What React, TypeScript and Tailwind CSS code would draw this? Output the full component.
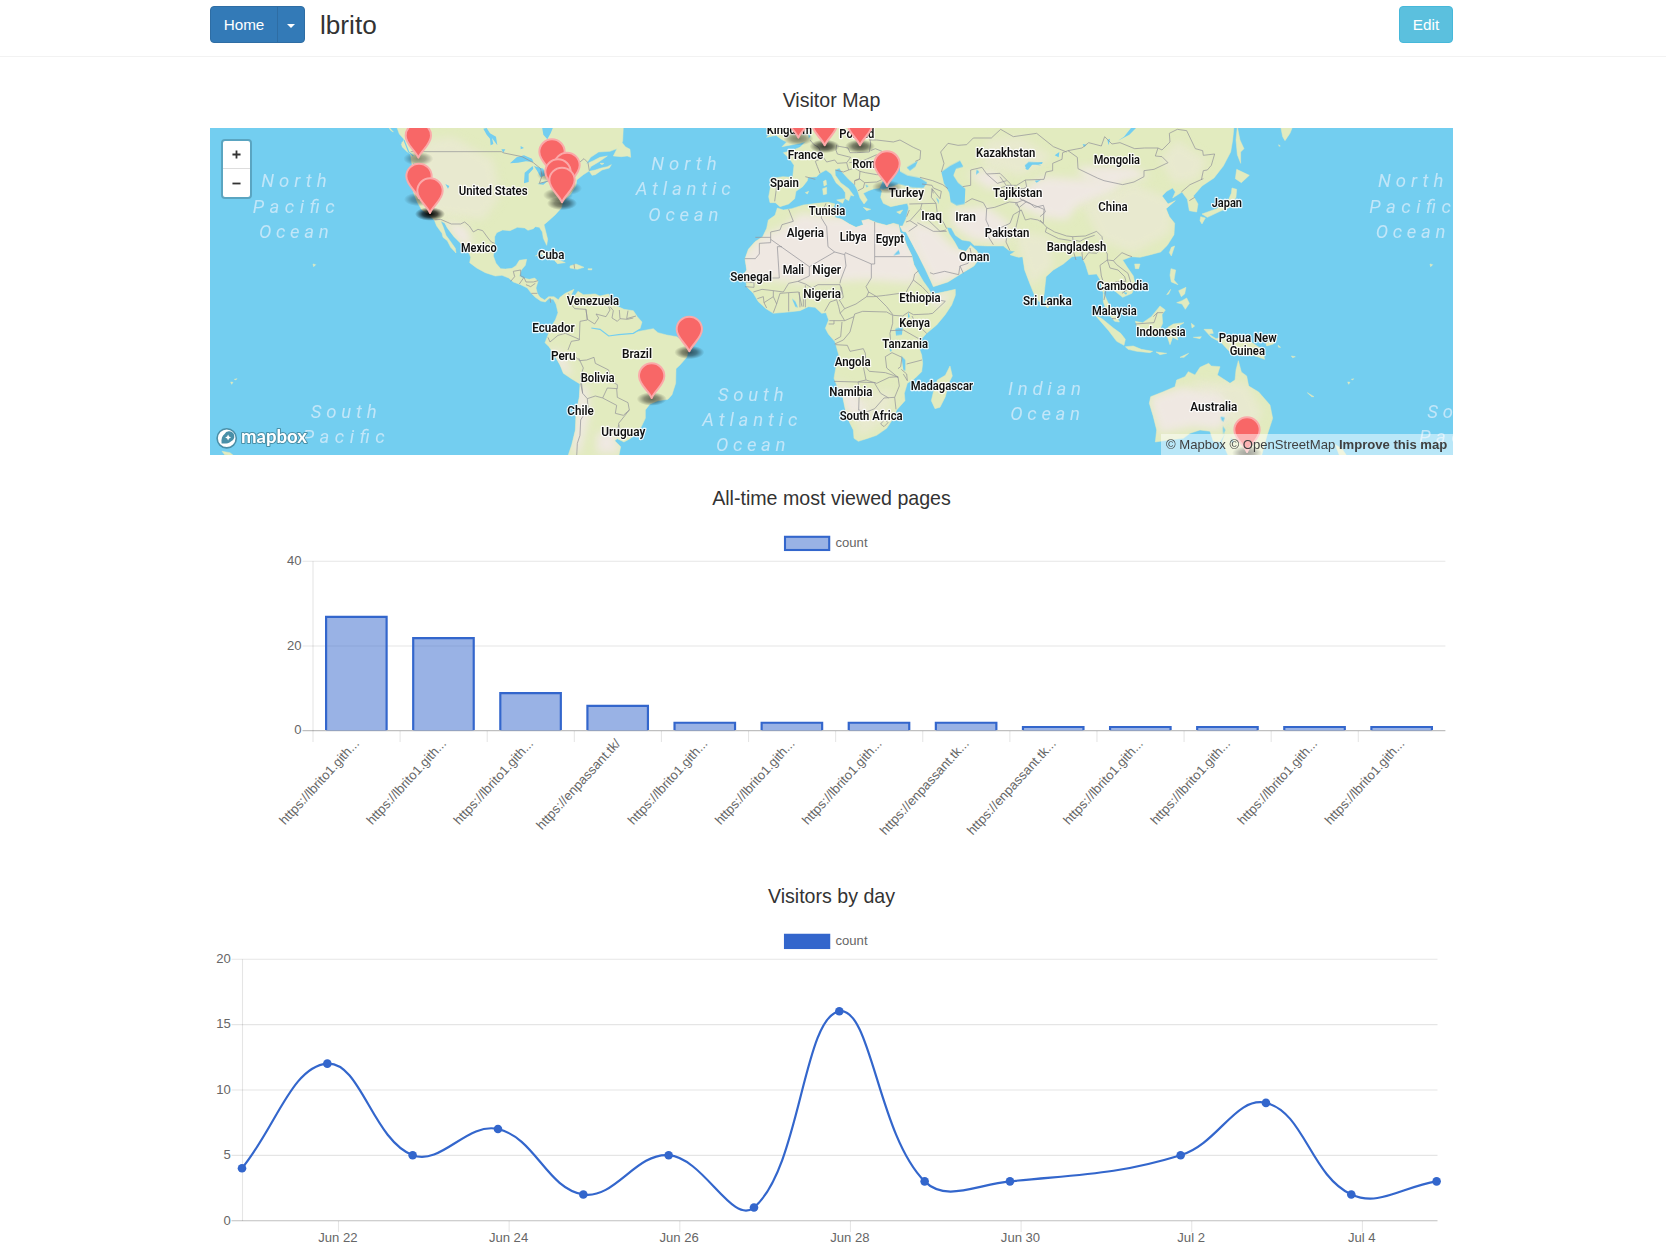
import React from "react";

/* ---------- map data: each region is drawn on its own 3x grid ---------- */

const AMERICAS = "translate(200 120) scale(.33333)";
const ATLANTIC = "translate(500 120) scale(.33333)";
const AFRICA = "translate(720 120) scale(.33333)";
const ASIA = "translate(1000 120) scale(.33333)";
const PACIFIC = "translate(1130 120) scale(.33333)";

const land: [string, string][] = [
  // North and Central America
  [AMERICAS, "M590 20L598 42L612 58L604 74L616 88L632 104L634 124L640 150L637 190L642 222L652 246L664 268L688 286L703 300L710 318L726 340L729 352L742 362L752 382L768 399L766 385L750 362L738 346L730 322L722 303L734 309L742 324L762 350L780 368L803 388L812 412L809 428L830 444L856 458L886 468L906 466L926 474L940 486L962 494L982 504L994 520L1006 532L1022 543L1036 546L1046 536L1060 538L1068 552L1076 540L1062 530L1046 530L1034 540L1020 532L1012 520L1008 504L1014 484L1004 474L988 478L968 474L958 468L964 450L976 436L980 418L958 421L948 437L936 445L916 447L902 446L888 430L880 408L884 382L884 350L890 338L908 330L930 332L952 322L974 324L984 331L1000 326L1006 320L1018 322L1027 336L1030 355L1040 376L1043 358L1036 330L1032 314L1046 302L1066 284L1084 264L1088 246L1112 222L1128 196L1130 180L1150 164L1166 154L1172 140L1196 126L1222 108L1200 112L1180 122L1158 132L1172 112L1196 96L1230 94L1256 84L1268 64L1270 20Z"],
  [AMERICAS, "M1168 154L1186 150L1204 144L1222 140L1234 134L1228 144L1206 150L1186 164L1176 166ZM1200 130L1212 130L1206 134Z"],
  [ATLANTIC, "M340 108L352 84L360 60L376 80L390 88L392 112L382 108L364 110Z"],
  [ATLANTIC, "M106 408L128 396L150 402L172 418L196 428L176 430L150 412L122 402ZM210 438L228 432L252 442L232 448L210 444ZM166 423L188 428L172 431ZM264 446L276 446L275 450L264 449Z"],
  // South America
  [ATLANTIC, "M168 552L180 532L196 520L222 508L214 524L222 530L234 514L250 524L286 522L300 528L326 522L332 542L346 556L372 568L400 572L412 590L426 606L420 626L406 636L460 626L474 638L500 645L530 650L550 664L566 690L560 712L540 735L528 746L527 790L516 824L504 838L474 842L450 852L436 870L436 895L424 920L405 944L390 956L372 966L352 956L344 962L362 980L356 1010L203 1010L215 975L226 930L228 880L238 830L240 792L214 776L190 760L180 735L160 700L147 680L135 668L144 645L150 625L166 600L174 578Z"],
  // Africa
  [AFRICA, "M172 264L190 270L215 266L250 255L290 250L325 247L345 252L338 266L350 280L344 292L365 298L388 312L408 322L430 314L425 302L445 298L470 308L500 316L520 310L536 314L540 335L552 352L560 376L575 406L582 434L596 460L610 484L626 506L634 522L652 520L680 514L706 508L706 526L695 555L675 585L650 615L620 640L605 656L596 680L605 705L608 730L605 755L585 775L562 790L553 820L555 842L530 870L520 895L500 925L470 946L440 956L415 964L402 955L400 930L385 900L376 870L368 830L352 800L342 775L348 740L360 718L352 690L345 665L325 642L316 625L326 600L318 578L305 580L285 562L265 560L240 572L205 576L160 580L138 566L115 545L100 520L80 500L78 485L66 472L80 450L75 416L85 388L105 365L128 350L140 325L145 300L165 286Z"],
  [AFRICA, "M690 738L697 768L686 790L676 830L660 862L645 866L634 842L642 808L652 780L676 766Z"],
  // Europe and Asia
  [AFRICA, "M190 98L210 118L222 136L218 172L188 170L150 176L152 198L146 230L150 248L166 248L180 260L206 252L224 236L228 214L248 200L262 182L264 172L290 170L300 160L318 150L334 162L348 188L368 206L376 218L376 236L386 242L392 226L402 228L386 206L362 188L346 166L345 150L358 144L366 156L386 178L404 194L412 210L420 234L432 252L442 240L430 220L446 212L462 206L480 204L486 214L482 232L490 250L512 260L540 254L562 250L566 264L558 296L548 318L540 318L548 334L558 336L575 368L596 408L616 448L632 482L640 500L684 486L722 462L762 438L782 410L770 392L752 376L738 394L716 388L704 366L688 342L680 322L694 324L706 346L726 360L750 364L762 376L800 378L850 378L868 392L886 394L870 404L896 412L908 410L914 450L930 492L946 532L958 546L972 525L978 470L1000 450L1030 432L1056 410L1084 408L1096 432L1106 464L1130 462L1142 482L1147 512L1156 530L1166 552L1188 584L1198 606L1184 604L1160 575L1150 545L1150 520L1160 500L1176 506L1208 532L1236 520L1246 495L1240 468L1222 442L1208 420L1234 410L1260 412L1292 404L1322 396L1342 376L1362 344L1364 310L1348 290L1338 266L1366 242L1344 252L1326 228L1340 214L1358 204L1366 216L1358 234L1386 216L1402 238L1408 272L1430 276L1434 252L1420 228L1446 198L1482 174L1510 138L1532 96L1538 60L1542 20L262 20L272 50L240 82L214 92Z"],
  [AFRICA, "M138 20L150 44L140 52L168 46L184 58L200 66L186 80L240 70L266 62L262 20Z"],
  [AFRICA, "M310 184L318 180L320 194L312 198ZM308 206L320 202L320 222L310 224ZM350 240L374 236L368 250ZM430 262L452 268L440 272ZM530 276L548 270L540 282ZM256 218L266 214L262 222Z"],
  [ASIA, "M712 20L720 60L732 86L722 96L722 130L712 104L708 60ZM710 148L748 166L724 188L706 176ZM696 204L710 208L708 232L690 262L660 274L622 292L606 282L650 266L686 238L694 220ZM602 290L616 294L606 312L600 302ZM514 382L524 378L514 408L508 398ZM404 432L420 432L416 446L406 446ZM136 540L152 548L144 564L134 556Z"],
  [ASIA, "M513 446L527 450L522 480L534 494L514 486L510 466ZM530 548L546 542L560 534L568 550L556 568L546 552ZM536 512L558 502L554 522L544 530ZM500 524L512 508L506 522Z"],
  [ASIA, "M284 584L306 596L340 624L362 640L376 658L372 676L350 664L326 632L300 602ZM376 680L400 678L424 688L458 694L450 698L410 694L384 688ZM406 604L428 608L454 590L480 558L496 570L486 584L488 610L470 650L442 646L416 632ZM504 622L520 612L552 608L530 622L526 636L534 660L518 652L510 674L502 650ZM468 696L500 700L480 704ZM540 712L566 700L552 712ZM574 610L584 618L576 624ZM580 652L604 650L600 656Z"],
  // Australia and Oceania
  [PACIFIC, "M222 628L246 628L250 640L236 642L258 656L290 648L360 664L396 688L404 718L370 706L320 704L296 692L274 668L244 652ZM408 670L440 658L430 672L410 678ZM444 676L452 682L446 682ZM484 708L496 710L488 713Z"],
  [PACIFIC, "M325 722L334 756L350 768L356 798L386 816L420 855L428 895L410 950L394 1010L296 1010L276 966L286 938L270 966L250 964L240 934L210 930L180 940L160 955L116 960L76 966L80 930L70 890L58 850L62 830L100 815L135 800L140 780L165 770L175 755L195 765L210 742L236 730L244 738L270 740L262 765L300 790L315 780L318 750Z"],
  [PACIFIC, "M616 974L636 986L652 1010L628 1006ZM653 786L660 787L656 793ZM664 778L671 776L668 780ZM532 818L552 830L545 830ZM900 432L908 434L902 440ZM452 20L488 20L480 40L465 62L458 50ZM446 74L451 78L447 79Z"],
  [AMERICAS, "M92 786L99 787L95 793ZM103 778L111 776L107 780ZM339 432L347 434L341 440ZM66 994L90 998L100 1006L74 1004ZM606 66L622 84L636 98L622 96L606 80ZM566 20L580 36L572 34Z"],
];

const lakes: [string, string][] = [
  [AMERICAS, "M930 130L950 112L972 106L996 116L1000 126L978 124L954 128ZM972 190L974 158L998 138L1000 146L986 162L986 186ZM1002 138L1030 146L1036 166L1022 172L1012 154ZM1012 192L1044 182L1030 194ZM850 26L860 44L870 56L872 76L880 72L876 54L892 76L888 50L870 40L860 24ZM904 88L916 88L910 98ZM736 192L748 198L744 206ZM1026 20L1030 44L1042 58L1052 40L1060 20ZM640 128L646 136L642 144ZM962 78L972 84L962 88Z"],
  [AFRICA, "M478 206L488 184L494 160L518 146L540 138L540 154L562 166L600 174L622 188L610 204L576 202L536 192L508 202L490 208ZM560 142L594 122L586 140L570 152ZM664 156L690 138L720 122L730 140L708 146L700 166L714 188L736 206L734 252L710 256L692 246L688 218L672 190ZM770 148L778 156L768 164ZM526 626L548 620L546 644L528 646ZM508 676L516 692L510 694ZM544 708L556 720L556 752L550 750ZM564 576L570 590L564 594ZM216 536L226 544L234 562L226 560ZM520 406L536 390L540 402ZM648 232L656 240L656 252ZM436 194L446 198L440 202ZM914 136L926 126L950 128L964 136L938 132L920 148Z"],
  [ASIA, "M354 62L372 50L396 20L408 24L388 44ZM76 146L88 128L128 126L126 132L96 134L84 150ZM248 72L260 74L252 82ZM322 60L330 56L326 76ZM164 106L178 96L176 112ZM104 182L122 180L110 188ZM368 516L382 518L378 524Z"],
  [PACIFIC, "M272 890L284 892L280 906L274 900ZM278 918L286 930L280 944ZM302 952L312 966L304 968Z"],
];

const deserts: [string, string][] = [
  // Sahara, Arabia, Iran, Tibet and Gobi
  [AFRICA, "M60 420L120 350L190 320L240 280L330 290L440 290L560 320L600 450L580 490L440 480L250 490L160 480L70 480Z"],
  [AFRICA, "M560 300L640 320L700 380L780 400L740 460L640 500L590 400Z"],
  [AFRICA, "M690 270L800 260L870 310L860 370L760 360L700 320Z"],
  [AFRICA, "M700 520L660 560L620 550L660 520Z"],
  [AFRICA, "M350 780L410 820L440 860L410 890L380 880Z"],
  [ASIA, "M30 230L130 170L270 180L370 190L330 220L230 260L200 300L120 290L60 260Z"],
  [ASIA, "M230 140L400 140L450 170L350 190L250 170Z"],
  [ASIA, "M-100 160L-20 150L20 190L-30 210Z"],
  [AMERICAS, "M730 300L800 320L820 380L780 370Z"],
  [ATLANTIC, "M230 790L262 800L270 880L240 1000L215 1000L230 880Z"],
  [ATLANTIC, "M290 940L340 930L360 1000L290 1000Z"],
  [ATLANTIC, "M150 680L190 700L220 770L180 750Z"],
  [PACIFIC, "M60 830L160 800L270 820L300 870L270 930L190 920L90 940L70 880Z"],
];

const khaki: [string, string][] = [
  [ASIA, "M250 260L400 190L520 240L510 340L400 400L300 360Z"],
  [ASIA, "M-40 60L60 50L160 110L60 170L-60 130Z"],
  [ASIA, "M40 330L150 350L160 440L90 500Z"],
  [ASIA, "M530 60L620 120L590 180L520 190L480 120Z"],
  [AFRICA, "M490 210L620 210L630 240L500 250Z"],
  [AFRICA, "M400 880L440 820L520 810L500 900L420 950Z"],
  [AMERICAS, "M680 60L760 50L880 120L900 230L850 300L760 290L690 280L660 200Z"],
  [PACIFIC, "M180 780L350 790L400 880L330 960L280 880Z"],
];

const borders: [string, string][] = [
  [AMERICAS, "M632 95L904 95L912 99L966 110L1000 128L1022 146L1026 168L1018 190L1050 182M1140 126L1152 116L1164 128L1168 152M703 300L722 298L754 312L782 312L794 306L808 318L820 336L834 328L848 332L864 354L874 366L884 370M932 484L944 470L940 454L962 450M962 450L962 468L972 472L958 492M972 472L978 486L1000 486L1014 482M978 494L992 500L1006 490M994 520L1012 520M1050 534L1052 548"],
  [ATLANTIC, "M206 520L210 548L224 566L258 568L262 600L240 604L238 660L214 664L204 690M258 568L262 598L284 612L296 594L288 582L318 590L330 570L326 560M330 560L340 572L336 594L352 604L360 596L358 570M384 572L380 596L408 588M360 596L382 598L400 594M144 652L150 666L174 646L196 640L238 658M228 712L238 722L260 720L282 712L286 730L326 750L328 768L318 776L352 794L352 806L322 804L308 834L286 828L262 836L248 820L242 790M236 714L250 744L242 768L248 820M262 836L264 864L242 900L240 946L232 970L230 1010M308 834L350 856L346 880L370 886L388 870L384 848L352 832L350 806M388 870L356 910L358 926L394 950M356 914L350 950M222 432L224 446"],
  [AFRICA, "M256 170L286 178M165 186L170 200L164 244M286 124L292 140L300 160M270 60L282 74L296 82L310 112L286 124M310 112L320 126L344 120L352 130L380 128L392 112L352 102L348 90L350 74M352 78L384 84L390 98L410 98L448 96L452 72L448 40L424 24M448 60L470 60L520 66L540 60L580 82L602 92L600 118L586 124M452 92L466 86L486 94L500 116L494 140M380 128L386 150L370 156L346 150M386 150L404 144L420 154L418 178L404 182L404 194M420 154L436 158L470 164L486 164M404 182L418 176L434 188L430 204L414 212M434 188L470 186L488 178M388 128L430 122L470 104M600 172L638 182L668 194L684 206M606 192L636 196L640 204L664 214L660 236L636 206M636 206L634 232L648 250L568 252M606 250L602 266L570 302L558 306M602 266L620 296L660 334L678 330M570 302L592 316L566 334M592 308L640 334L680 334M568 270L560 290M636 206L640 220M648 250L652 280L672 310L680 326M800 266L798 300L806 318L800 342L820 374M736 248L756 236L790 248L800 266M800 266L824 262L868 246L890 248M728 200L752 196L752 150L786 142L800 162L832 190L860 182M800 162L840 160L870 190L880 206L912 206M664 156L672 130L662 96L684 70L714 76L740 74L760 54L814 54L842 28L880 50L950 40L1000 80L1040 96M630 458L640 462L674 454L716 464L720 438L744 430L754 402L750 384M720 438L730 460M890 248L900 270L886 330L862 340L858 366L870 392M886 250L910 240L930 250L944 262L970 256L976 276L960 290"],
  [AFRICA, "M206 268L220 304L186 314L180 330L152 336L152 368L118 370L118 402L106 416L74 416M106 352L152 352M152 358L268 440L344 396L324 380L320 320L304 294L306 278L318 250M172 380L178 474L138 474M172 380L186 380M344 396L374 404L376 398L454 432L454 474M464 306L464 410L576 410M464 410L464 432L454 432M268 440L268 468L234 484L206 490L190 516L160 512M374 404L378 438L362 480L360 490M234 484L256 492L276 504L294 494L360 494L366 520L348 540L330 546L314 574M256 496L256 562M206 518L236 516L246 560M206 518L206 574M238 516L240 562M250 520L250 560M364 500L370 532L358 540L374 566L408 552L440 530L446 516L438 500L454 474M440 530L460 530L496 526L540 520M446 516L470 530L500 560L520 586L548 588L566 576L580 584L626 582L638 580L676 544L640 536L606 500L580 480L564 506L552 530M360 580L374 566M374 602L360 578L356 560L350 540M374 602L328 602M326 612L342 612L342 602M374 602L402 590L404 582L428 574L500 576L518 586L518 610L510 640L512 666M402 590L390 636L370 660L344 672M366 606L362 650L344 660M346 674L382 676L390 694L430 686L436 700L438 742L448 754L496 758L520 766L534 772L500 744L496 710L516 698M430 740L438 780L412 786L342 784M438 780L470 790L508 772L534 770L538 798L524 832L492 834L464 866L440 876L416 870L418 806L414 786L466 788M464 790L482 820L506 834M524 832L528 868M418 870L418 902L392 896M482 912L494 898L504 908L492 920ZM516 698L546 712L542 740L534 746M544 748L560 762L562 782L550 762M560 732L606 720M576 588L586 608L620 640M550 630L596 656M510 632L550 630M580 480L584 462L596 452M75 500L102 502L102 488L78 486M100 516L126 508L160 512M112 536L130 530L132 548L140 564M160 512L160 530L132 548M160 530L170 552L160 578M170 552L180 520L206 518"],
  [ASIA, "M204 92L232 112L234 146L292 174L312 182L368 194L402 186L432 170L432 152L462 148L504 128L486 110L466 108L474 84L434 84L404 86L360 68L336 72L314 50L304 78L266 68L246 84L204 92M474 84L486 90L510 66L508 40L532 28L560 32L586 86L608 92L610 106L644 102L634 136L622 150L610 152L604 180M544 216L570 194L610 176M568 242L584 232M204 92L188 98L186 118L158 130L158 152L138 156L132 178L76 180L50 196L20 196M0 170L20 198L0 204M76 180L80 200L60 214L60 236L78 246L58 262L46 252M78 246L108 258L132 268L130 310L114 300L92 296L76 300L64 270L40 284L30 310L0 324M120 300L140 322L164 336L200 348L218 350L256 348L290 334L306 350L310 380L322 402L322 420L340 422L366 398L384 406L396 410M140 322L136 336L176 356L214 362M218 350L220 370L244 378L248 420M218 374L222 400L228 420M220 360L240 364L254 356L284 346M310 380L290 400L266 398L250 420M322 420L300 436L304 468L318 510L312 540M322 420L330 444L354 450L374 470L378 484L346 486L350 500M340 422L350 434L384 460L392 486L372 516M366 520L392 500M336 596L348 596M406 612L462 608L472 578L490 578M460 590L472 578"],
];

const rivers: [string, string][] = [
  [ATLANTIC, "M274 624L300 628L326 648L356 644L400 640L420 628"],
  [AMERICAS, "M612 60L626 96L640 108M560 24L590 50L600 70"],
];

/* [text, origin x, left, right, baseline] */
const labels: [string, number, number, number, number][] = [
  ["United States", 200, 776, 983, 224],
  ["Mexico", 200, 783, 890, 394],
  ["Cuba", 200, 1014, 1093, 414],
  ["Venezuela", 200, 1100, 1257, 552],
  ["Ecuador", 200, 997, 1124, 634],
  ["Peru", 200, 1053, 1127, 718],
  ["Bolivia", 200, 1142, 1244, 784],
  ["Chile", 200, 1102, 1181, 882],
  ["Uruguay", 500, 304, 436, 947],
  ["Brazil", 500, 366, 456, 713],
  ["Kingdom", 720, 140, 276, 40],
  ["Poland", 720, 358, 463, 52],
  ["France", 720, 203, 310, 115],
  ["Spain", 720, 150, 237, 200],
  ["Romania", 720, 397, 530, 142],
  ["Turkey", 720, 506, 612, 228],
  ["Kazakhstan", 720, 768, 946, 110],
  ["Tajikistan", 720, 819, 967, 230],
  ["Tunisia", 720, 266, 376, 284],
  ["Iraq", 720, 604, 666, 298],
  ["Iran", 720, 706, 768, 302],
  ["Algeria", 720, 200, 312, 350],
  ["Libya", 720, 359, 440, 362],
  ["Egypt", 720, 467, 552, 367],
  ["Pakistan", 720, 794, 928, 350],
  ["Oman", 720, 717, 808, 420],
  ["Mali", 720, 188, 252, 459],
  ["Niger", 720, 277, 363, 459],
  ["Senegal", 720, 31, 156, 480],
  ["Nigeria", 720, 250, 363, 533],
  ["Ethiopia", 720, 538, 662, 543],
  ["Kenya", 720, 538, 630, 618],
  ["Tanzania", 720, 487, 624, 682],
  ["Angola", 720, 344, 452, 737],
  ["Madagascar", 720, 572, 759, 808],
  ["Namibia", 720, 328, 457, 826],
  ["South Africa", 720, 359, 548, 899],
  ["Mongolia", 1000, 281, 420, 129],
  ["China", 1000, 295, 383, 270],
  ["Japan", 1000, 635, 726, 260],
  ["Bangladesh", 1000, 140, 319, 390],
  ["Cambodia", 1000, 290, 445, 507],
  ["Sri Lanka", 1000, 69, 215, 552],
  ["Malaysia", 1000, 276, 410, 582],
  ["Indonesia", 1000, 409, 557, 645],
  ["Papua New", 1130, 266, 440, 665],
  ["Guinea", 1130, 299, 405, 703],
  ["Australia", 1130, 181, 322, 871],
];

/* [text, origin x, left, right, baseline] */
const oceans: [string, number, number, number, number][] = [
  ["North", 200, 186, 382, 203],
  ["Pacific", 200, 160, 406, 279],
  ["Ocean", 200, 179, 388, 355],
  ["South", 200, 334, 532, 896],
  ["Pacific", 200, 310, 556, 971],
  ["North", 500, 456, 652, 150],
  ["Atlantic", 500, 409, 694, 227],
  ["Ocean", 500, 447, 657, 303],
  ["South", 500, 655, 853, 843],
  ["Atlantic", 500, 609, 894, 919],
  ["Ocean", 500, 650, 858, 995],
  ["Indian", 1000, 26, 245, 825],
  ["Ocean", 1000, 33, 242, 901],
  ["North", 1130, 746, 942, 203],
  ["Pacific", 1130, 720, 965, 279],
  ["Ocean", 1130, 739, 948, 355],
  ["South", 1130, 894, 1092, 896],
  ["Pacific", 1130, 870, 1116, 971],
];

/* [origin x, head x, head y, shadow opacity] */
const pins: [number, number, number, number][] = [
  [200, 655, 47, 0.4],
  [720, 235, -13, 0.45],
  [720, 314, 10, 0.75],
  [720, 420, 10, 0.65],
  [200, 1056, 96, 0.4],
  [720, 501, 132, 0.45],
  [200, 1101, 136, 0.4],
  [200, 1074, 156, 0.45],
  [200, 657, 169, 0.4],
  [200, 1086, 181, 0.6],
  [200, 690, 213, 1],
  [500, 568, 628, 0.6],
  [500, 455, 768, 0.55],
  [1130, 351, 930, 0.7],
];

const third = (n: number) => n / 3;

function Shapes({ items }: { items: [string, string][] }) {
  return (
    <>
      {items.map(([t, d], i) => (
        <path key={i} transform={t} d={d} />
      ))}
    </>
  );
}

function WorldMap() {
  return (
    <svg viewBox="210 128 1243 327" className="block h-full w-full">
      <defs>
        <clipPath id="landClip">
          <Shapes items={land} />
        </clipPath>
        <filter id="soften" x="-20%" y="-20%" width="140%" height="140%">
          <feGaussianBlur stdDeviation="4" />
        </filter>
        <radialGradient id="pinShadow">
          <stop offset="0" stopColor="#000" stopOpacity="1" />
          <stop offset=".5" stopColor="#000" stopOpacity=".7" />
          <stop offset="1" stopColor="#000" stopOpacity="0" />
        </radialGradient>
      </defs>
      <rect x="210" y="128" width="1243" height="327" fill="#73cef0" />
      <g fill="#e2ebbf" stroke="#e2ebbf" strokeWidth="1.5" strokeLinejoin="round">
        <Shapes items={land} />
      </g>
      <g clipPath="url(#landClip)">
        <g filter="url(#soften)" fill="#e8e9cf">
          <Shapes items={khaki} />
        </g>
        <g filter="url(#soften)" fill="#efe8e2">
          <Shapes items={deserts} />
        </g>
      </g>
      <g fill="#73cef0">
        <Shapes items={lakes} />
      </g>
      <g fill="none" stroke="#73cef0" strokeWidth="3.5">
        <Shapes items={rivers} />
      </g>
      <g fill="none" stroke="#94949a" strokeWidth="2.2" strokeLinejoin="round">
        <Shapes items={borders} />
      </g>
      <g fill="#c2e6f8" className="font-['Roboto'] italic" fontSize="18.5" fontWeight="400">
        {oceans.map(([text, ox, l, r, b], i) => (
          <text key={i} x={ox + third(l) - 0.7} y={119.5 + third(b)} textLength={third(r - l)} lengthAdjust="spacing">
            {text}
          </text>
        ))}
      </g>
      <g
        fill="#111"
        stroke="#fff"
        strokeOpacity=".85"
        strokeWidth="2.4"
        strokeLinejoin="round"
        paintOrder="stroke"
        className="font-['Roboto']"
        fontSize="12"
        fontWeight="600"
      >
        {labels.map(([text, ox, l, r, b], i) => (
          <text
            key={i}
            x={ox + third(l)}
            y={120.5 + third(b)}
            textLength={third(r - l)}
            lengthAdjust="spacingAndGlyphs"
          >
            {text}
          </text>
        ))}
      </g>
      {pins.map(([ox, x, y, o], i) => (
        <ellipse
          key={i}
          cx={ox + third(x)}
          cy={120 + third(y + 69)}
          rx="15"
          ry="6.8"
          fill="url(#pinShadow)"
          opacity={o}
        />
      ))}
      {pins.map(([ox, x, y], i) => (
        <path
          key={i}
          transform={`translate(${ox + third(x)} ${120 + third(y)}) scale(.33333)`}
          d="M0 66C-9 44-38 26-38 0A38 38 0 1 1 38 0C38 26 9 44 0 66Z"
          fill="#f86767"
          stroke="#fba9a9"
          strokeWidth="6"
          strokeLinejoin="round"
        />
      ))}
    </svg>
  );
}

function MapboxLogo() {
  return (
    <svg viewBox="0 0 96 24" className="block h-6 w-24">
      <circle cx="11.7" cy="12.3" r="9.6" fill="#fff" stroke="#4a8fa8" strokeWidth="1.6" />
      <path
        d="M6.6 17.4C6 12.8 7.3 9.7 9.6 8.1A5.2 5.2 0 1 1 15.9 15.4C13.6 17.4 10.2 18 6.6 17.4Z"
        fill="#4a90a8"
      />
      <path d="M13.1 8.6l.95 2 2 .95-2 .95-.95 2-.95-2-2-.95 2-.95z" fill="#fff" />
      <text
        x="26"
        y="17.4"
        textLength="66"
        lengthAdjust="spacingAndGlyphs"
        fontSize="18"
        fontWeight="700"
        fill="#fff"
        stroke="#4a90a8"
        strokeWidth="2"
        strokeLinejoin="round"
        paintOrder="stroke"
        className="font-['Lato']"
      >
        mapbox
      </text>
    </svg>
  );
}

function VisitorMap() {
  return (
    <div className="relative h-[327px] overflow-hidden">
      <WorldMap />
      <div className="absolute left-[11px] top-[11px] flex h-[60px] w-[31px] flex-col rounded-[4px] border-2 border-[#5aa5c1] bg-white">
        <button className="flex h-[28px] items-center justify-center border-b border-[#ddd]">
          <svg viewBox="0 0 10 10" className="h-[9px] w-[9px]">
            <path d="M5 .5v9M.5 5h9" stroke="#333" strokeWidth="2" />
          </svg>
        </button>
        <button className="flex flex-1 items-center justify-center">
          <svg viewBox="0 0 10 10" className="h-[9px] w-[9px]">
            <path d="M.5 5h9" stroke="#333" strokeWidth="2" />
          </svg>
        </button>
      </div>
      <div className="absolute left-[5px] top-[298px]">
        <MapboxLogo />
      </div>
      <div className="absolute bottom-0 right-0 flex h-[21px] w-[292px] items-center whitespace-pre bg-white/50 pl-[5px] text-[13.1px] text-[#404040]">
        © Mapbox © OpenStreetMap <b>Improve this map</b>
      </div>
    </div>
  );
}

/* ---------- charts ---------- */

const AXIS_TEXT = "#666";
const GITH = "https://lbrito1.gith...";
const PASSANT = "https://enpassant.tk...";

const pages: [string, number][] = [
  [GITH, 27],
  [GITH, 22],
  [GITH, 9],
  ["https://enpassant.tk/", 6],
  [GITH, 2],
  [GITH, 2],
  [GITH, 2],
  [PASSANT, 2],
  [PASSANT, 1],
  [GITH, 1],
  [GITH, 1],
  [GITH, 1],
  [GITH, 1],
];

function Legend({ y, fill }: { y: number; fill: string }) {
  return (
    <>
      <rect x="785" y={y} width="44.2" height="13.2" fill={fill} stroke="#3366cc" strokeWidth="2.1" />
      <text x="835.5" y={y + 10.2} fill={AXIS_TEXT} fontSize="13.1">
        count
      </text>
    </>
  );
}

function BarChart() {
  const left = 313;
  const right = 1445.4;
  const base = 730.6;
  const step = (right - left) / pages.length;
  const y = (v: number) => base - v * 4.232;
  return (
    <svg viewBox="210 526 1243 327" className="block h-[327px] w-full overflow-visible">
      <Legend y={536.8} fill="rgba(51,102,204,.5)" />
      {[40, 20, 0].map((v) => (
        <g key={v}>
          <path d={`M302.5 ${y(v)}H${right}`} stroke={v ? "rgba(0,0,0,.1)" : "rgba(0,0,0,.25)"} strokeWidth="1.09" />
          <text x="301.5" y={y(v) + 3.8} textAnchor="end" fill={AXIS_TEXT} fontSize="13.1">
            {v}
          </text>
        </g>
      ))}
      <path d={`M${left} 561.3V742`} stroke="rgba(0,0,0,.1)" strokeWidth="1.09" />
      {pages.map(([label, v], i) => {
        const x = left + i * step;
        const bx = x + step * 0.14 + 0.9;
        const bw = step * 0.72 - 2.2;
        const cx = x + step / 2;
        return (
          <g key={i}>
            {i > 0 && <path d={`M${x} 731V742`} stroke="rgba(0,0,0,.1)" strokeWidth="1.09" />}
            <rect x={bx} y={y(v)} width={bw} height={base - y(v)} fill="rgba(51,102,204,.5)" />
            <path
              d={`M${bx} ${base - 0.5}V${y(v) + 0.6}H${bx + bw}V${base - 0.5}`}
              fill="none"
              stroke="#3366cc"
              strokeWidth="2.18"
            />
            <text
              transform={`translate(${cx} 741) rotate(-47.5)`}
              y="4.5"
              textAnchor="end"
              fill={AXIS_TEXT}
              fontSize="13.1"
            >
              {label}
            </text>
          </g>
        );
      })}
    </svg>
  );
}

type Point = { x: number; y: number };

const visits: [number, number][] = [
  [0, 4], [1, 12], [2, 5], [3, 7], [4, 2], [5, 5], [6, 1],
  [7, 16], [8, 3], [9, 3], [11, 5], [12, 9], [13, 2], [14, 3],
];

function controls(prev: Point, cur: Point, next: Point) {
  const a = Math.hypot(cur.x - prev.x, cur.y - prev.y);
  const b = Math.hypot(next.x - cur.x, next.y - cur.y);
  const fa = (0.4 * a) / (a + b || 1);
  const fb = (0.4 * b) / (a + b || 1);
  return {
    before: { x: cur.x - fa * (next.x - prev.x), y: cur.y - fa * (next.y - prev.y) },
    after: { x: cur.x + fb * (next.x - prev.x), y: cur.y + fb * (next.y - prev.y) },
  };
}

function spline(pts: Point[]) {
  const c = pts.map((p, i) => controls(pts[i - 1] || p, p, pts[i + 1] || p));
  return pts
    .map((p, i) =>
      i === 0
        ? `M${p.x} ${p.y}`
        : `C${c[i - 1].after.x} ${c[i - 1].after.y} ${c[i].before.x} ${c[i].before.y} ${p.x} ${p.y}`
    )
    .join("");
}

const days = ["Jun 22", "Jun 24", "Jun 26", "Jun 28", "Jun 30", "Jul 2", "Jul 4"];

function LineChart() {
  const base = 1220.8;
  const y = (v: number) => base - v * 13.08;
  const pts = visits.map(([d, v]) => ({ x: 242 + d * 85.33, y: y(v) - 0.2 }));
  return (
    <svg viewBox="210 924 1243 327" className="block h-[327px] w-full overflow-visible">
      <Legend y={934.8} fill="#3366cc" />
      {[20, 15, 10, 5, 0].map((v) => (
        <g key={v}>
          <path d={`M231.5 ${y(v)}H1437.5`} stroke={v ? "rgba(0,0,0,.1)" : "rgba(0,0,0,.25)"} strokeWidth="1.09" />
          <text x="230.8" y={y(v) + 3.8} textAnchor="end" fill={AXIS_TEXT} fontSize="13.1">
            {v}
          </text>
        </g>
      ))}
      <path d="M242.5 959.3V1221" stroke="rgba(0,0,0,.1)" strokeWidth="1.09" />
      {days.map((d, i) => (
        <g key={d}>
          <path d={`M${338.5 + i * 170.65} 1221V1232`} stroke="rgba(0,0,0,.1)" strokeWidth="1.09" />
          <text x={337.9 + i * 170.65} y="1242" textAnchor="middle" fill={AXIS_TEXT} fontSize="13.1">
            {d}
          </text>
        </g>
      ))}
      <path d={spline(pts)} fill="none" stroke="#3366cc" strokeWidth="2.18" />
      {pts.map((p, i) => (
        <circle key={i} cx={p.x} cy={p.y} r="4.3" fill="#3366cc" />
      ))}
    </svg>
  );
}

function Section({ title, children }: { title: string; children: React.ReactNode }) {
  return (
    <section className="pt-8">
      <h4 className="mb-[17px] h-[22px] text-center text-[19.62px] font-normal leading-[22px]">{title}</h4>
      {children}
    </section>
  );
}

export default function App() {
  return (
    <div className="h-[1252px] overflow-hidden bg-white font-['Liberation_Sans',Arial,sans-serif] text-[#333]">
      <header className="flex h-[57px] items-start border-b border-[#f2f2f2] pl-[210px] pt-[6px]">
        <div className="flex w-[1243px] items-center justify-between">
          <div className="flex items-center">
            <div className="flex h-[37px] overflow-hidden rounded-[4px] border border-[#2e6da4] bg-[#337ab7] text-[15.26px] text-white">
              <button className="w-[67px] border-r border-[#2e6da4] pt-0.5">Home</button>
              <button className="flex w-[26px] items-center justify-center pt-0.5">
                <span className="h-0 w-0 border-x-4 border-t-4 border-x-transparent border-t-white" />
              </button>
            </div>
            <h3 className="ml-[15px] h-[37px] text-[26.16px] leading-[39px]">lbrito</h3>
          </div>
          <button className="h-[37px] w-[54px] rounded-[4px] border border-[#46b8da] bg-[#5bc0de] pt-0.5 text-[15.26px] text-white">
            Edit
          </button>
        </div>
      </header>
      <main className="ml-[210px] w-[1243px]">
        <Section title="Visitor Map">
          <VisitorMap />
        </Section>
        <Section title="All-time most viewed pages">
          <BarChart />
        </Section>
        <Section title="Visitors by day">
          <LineChart />
        </Section>
      </main>
    </div>
  );
}
